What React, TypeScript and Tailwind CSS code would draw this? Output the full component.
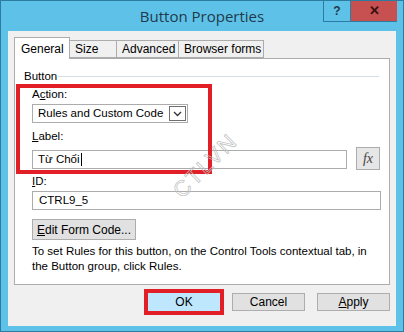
import React from "react";

const font = { fontFamily: '"Liberation Sans", Arial, sans-serif' };

const Tab = ({ label, active, w }: { label: string; active?: boolean; w: string }) =>
  active ? (
    <div className={`relative z-10 -mr-px mb-[-1px] flex h-[22px] items-center border border-b-0 border-[#acacac] bg-white pl-[6px] text-[12px] text-black ${w}`}>
      {label}
    </div>
  ) : (
    <div className={`-mr-px mt-[3px] flex h-[18px] items-center border border-[#acacac] bg-[#f0f0f0] pl-[5px] text-[12px] text-black ${w}`}>
      {label}
    </div>
  );

const Btn = ({ children, className = "" }: { children: React.ReactNode; className?: string }) => (
  <div
    className={`flex items-center justify-center border border-[#adadad] bg-[#e1e1e1] text-[12px] text-black ${className}`}
  >
    {children}
  </div>
);

export default function App() {
  return (
    <div
      className="flex h-[332px] w-[404px] flex-col overflow-hidden border border-[#2b7ca0] bg-[#5ec2e8]"
      style={font}
    >
      {/* Title bar */}
      <div className="relative flex h-[30px] shrink-0 items-center justify-center">
        <span className="text-[15px] text-[#1e3a4a]" style={{ fontFamily: '"Open Sans", sans-serif' }}>
          Button Properties
        </span>
        <div className="absolute right-[6px] top-0 flex h-[21px]">
          <div className="flex w-[28px] items-center justify-center border border-[#2b7ca0] border-t-0 text-[12px] font-bold text-[#1e3a4a]">
            ?
          </div>
          <div className="flex w-[46px] items-center justify-center border-b border-[#2b7ca0] bg-[#c75050] text-[13px] font-bold text-[#3a1010]">
            ✕
          </div>
        </div>
      </div>

      {/* Client area */}
      <div className="mx-[7px] mb-[5px] flex flex-1 flex-col bg-[#f0f0f0] px-[6px] pt-[6px]">
        {/* Tabs */}
        <div className="flex items-start">
          <Tab label="General" active w="w-[56px]" />
          <Tab label="Size" w="w-[48px]" />
          <Tab label="Advanced" w="w-[63px]" />
          <Tab label="Browser forms" w="w-[86px]" />
        </div>

        {/* Panel */}
        <div className="relative flex h-[227px] w-[376px] flex-col border border-[#acacac] bg-white pl-[9px] pr-[4px] pt-[9px] text-[11.5px] text-black">
          <div className="mr-[6px] flex items-center">
            <span className="leading-[16px]">Button</span>
            <div className="ml-[1px] h-px flex-1 bg-[#d5dfe5]" />
          </div>

          <div className="flex flex-col pl-[8px]">
            <div className="mt-[2px] leading-[16px]">
              A<span className="underline">c</span>tion:
            </div>
            <div className="mt-[2px] flex h-[19px] w-[156px] items-center justify-between border border-[#acacac] bg-white pl-[5px] pr-[1px]">
              <span className="whitespace-nowrap">Rules and Custom Code</span>
              <div className="flex h-[15px] w-[17px] items-center justify-center border border-[#707070]">
                <svg width="9" height="6" viewBox="0 0 9 6">
                  <path d="M1 1 L4.5 4.5 L8 1" fill="none" stroke="#333" strokeWidth="1.3" />
                </svg>
              </div>
            </div>

            <div className="mt-[5px] leading-[16px]">
              <span className="underline">L</span>abel:
            </div>
            <div className="mt-[5px] flex items-center">
              <div className="flex h-[19px] w-[315px] items-center border border-[#acacac] bg-white pl-[5px]">
                Từ Chối<span className="ml-px inline-block h-[13px] w-px bg-black" />
              </div>
              <div className="ml-[9px] mt-[-2px] flex h-[23px] w-[24px] items-center justify-center border border-[#acacac] bg-[#e6e6e6]">
                <span className="text-[14px] italic text-[#444]" style={{ fontFamily: '"Liberation Serif", serif' }}>
                  fx
                </span>
              </div>
            </div>

            <div className="mt-[3px] leading-[16px]">
              <span className="underline">I</span>D:
            </div>
            <div className="mt-[2px] flex h-[19px] w-[349px] items-center border border-[#acacac] bg-white pl-[6px]">
              CTRL9_5
            </div>

            <Btn className="mt-[9px] h-[21px] w-[104px] text-[11.5px]">
              <span>
                <span className="underline">E</span>dit Form Code...
              </span>
            </Btn>

            <p className="mt-[4px] leading-[15px]">
              To set Rules for this button, on the Control Tools contextual tab, in the Button group, click Rules.
            </p>
          </div>

          {/* Red annotation box */}
          <div className="pointer-events-none absolute left-[1px] top-[25px] h-[90px] w-[196px] border-[4px] border-[#e21f26]" />

          {/* Watermark */}
          <div className="pointer-events-none absolute left-[150px] top-[90px] -rotate-[45deg] text-[22px] tracking-[2px] text-transparent [-webkit-text-stroke:0.7px_#bdbdbd]">
            CTLVN
          </div>
        </div>

        {/* Bottom buttons */}
        <div className="mt-[4px] flex items-center justify-end gap-[8px]">
          <div className="flex h-[26px] w-[80px] items-center justify-center border-[4px] border-[#e21f26] bg-[#bee6fd] text-[12px] text-black">
            OK
          </div>
          <Btn className="h-[18px] w-[73px]">Cancel</Btn>
          <Btn className="ml-[4px] h-[18px] w-[73px]">
            <span>
              <span className="underline">A</span>pply
            </span>
          </Btn>
        </div>
      </div>
    </div>
  );
}
